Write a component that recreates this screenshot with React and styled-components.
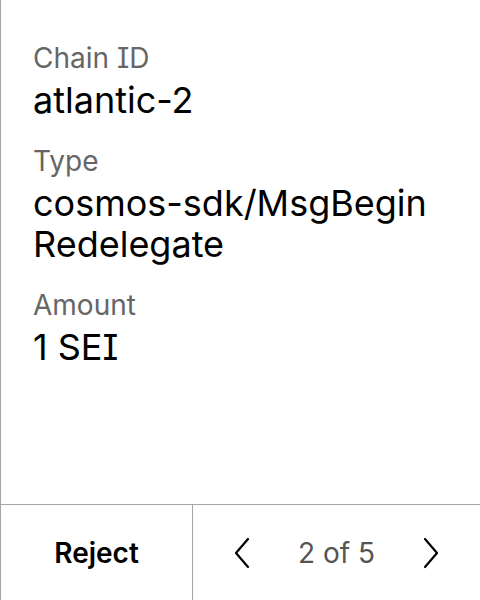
import React from 'react';
import styled, { createGlobalStyle } from 'styled-components';

const GlobalStyle = createGlobalStyle`
  html, body {
    margin: 0;
    padding: 0;
    background: #ffffff;
  }
  body {
    font-family: Inter, "Noto Sans", sans-serif;
    font-feature-settings: 'cv08' 1;
    color: #000000;
  }
`;

const fields = [
  { label: 'Chain ID', value: 'atlantic-2' },
  { label: 'Type', value: 'cosmos-sdk/MsgBeginRedelegate' },
  { label: 'Amount', value: '1 SEI' },
];

const Chevron = ({ dir }) => (
  <svg width="18" height="32" viewBox="0 0 18 32" fill="none">
    <polyline
      points={dir === 'left' ? '15,2 3,16 15,30' : '3,2 15,16 3,30'}
      stroke="#000"
      strokeWidth="2.2"
      strokeLinecap="round"
      strokeLinejoin="round"
    />
  </svg>
);

const App = () => {
  return (
    <>
      <GlobalStyle />
      <Screen>
        <Details>
          {fields.map((f) => (
            <Field key={f.label}>
              <Label>{f.label}</Label>
              <Value>{f.value}</Value>
            </Field>
          ))}
        </Details>
        <Footer>
          <RejectButton>Reject</RejectButton>
          <Pager>
            <NavButton aria-label="previous">
              <Chevron dir="left" />
            </NavButton>
            <PageCount>2 of 5</PageCount>
            <NavButton aria-label="next">
              <Chevron dir="right" />
            </NavButton>
          </Pager>
        </Footer>
      </Screen>
    </>
  );
};

const Screen = styled.div`
  display: flex;
  flex-direction: column;
  width: 480px;
  height: 600px;
  box-sizing: border-box;
  border-left: 1px solid #a6a6a6;
`;

const Details = styled.div`
  flex: 1;
  display: flex;
  flex-direction: column;
  gap: 25px;
  padding: 42px 32px 0 32px;
`;

const Field = styled.div`
  display: flex;
  flex-direction: column;
  gap: 4px;
`;

const Label = styled.div`
  font-size: 28px;
  line-height: 1.2;
  color: #666666;
`;

const Value = styled.div`
  font-size: 36px;
  line-height: 1.13;
  color: #000000;
  word-break: break-all;
`;

const Footer = styled.div`
  display: flex;
  flex-shrink: 0;
  box-sizing: border-box;
  height: 96px;
  border-top: 1px solid #a6a6a6;
`;

const RejectButton = styled.button`
  width: 192px;
  border: none;
  border-right: 1px solid #a6a6a6;
  background: none;
  font-family: Inter, sans-serif;
  font-size: 28px;
  font-weight: 600;
  color: #000;
  cursor: pointer;
`;

const Pager = styled.div`
  flex: 1;
  display: flex;
  align-items: center;
  justify-content: center;
  gap: 47px;
`;

const NavButton = styled.button`
  display: flex;
  align-items: center;
  justify-content: center;
  padding: 0;
  border: none;
  background: none;
  cursor: pointer;
`;

const PageCount = styled.span`
  font-size: 28px;
  color: #555555;
`;

export default App;
